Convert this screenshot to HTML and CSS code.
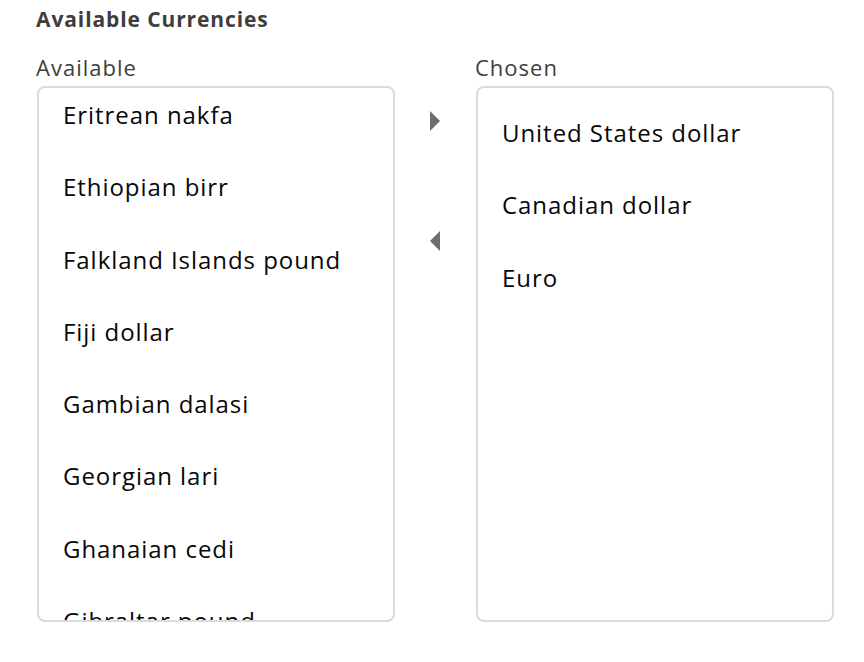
FILE: index.html
```html
<!DOCTYPE html>
<html>
<head>
<meta charset="utf-8">
<link rel="stylesheet" href="styles.css">
</head>
<body>
<div class="dueling">
  <div class="legend">Available Currencies</div>
  <div class="columns">
    <div class="col">
      <div class="label">Available</div>
      <div class="box">
        <ul class="list scrolled">
          <li>Eritrean nakfa</li>
          <li>Ethiopian birr</li>
          <li>Falkland Islands pound</li>
          <li>Fiji dollar</li>
          <li>Gambian dalasi</li>
          <li>Georgian lari</li>
          <li>Ghanaian cedi</li>
          <li>Gibraltar pound</li>
          <li>Guatemalan quetzal</li>
        </ul>
      </div>
    </div>
    <div class="buttons">
      <button class="arrow" aria-label="Move to Chosen">
        <svg width="12" height="22" viewBox="0 0 12 22"><path d="M1 1 L11 11 L1 21 Z" fill="#706e6b"/></svg>
      </button>
      <button class="arrow" aria-label="Move to Available">
        <svg width="12" height="22" viewBox="0 0 12 22"><path d="M11 1 L1 11 L11 21 Z" fill="#706e6b"/></svg>
      </button>
    </div>
    <div class="col">
      <div class="label">Chosen</div>
      <div class="box">
        <ul class="list">
          <li>United States dollar</li>
          <li>Canadian dollar</li>
          <li>Euro</li>
        </ul>
      </div>
    </div>
  </div>
</div>
</body>
</html>
```

FILE: styles.css
```css
html, body {
  margin: 0;
  padding: 0;
  background: #ffffff;
}
body {
  font-family: "Open Sans", "Lato", sans-serif;
  color: #080707;
}
.dueling {
  padding: 4px 0 0 36px;
}
.legend {
  font-size: 21px;
  font-weight: 700;
  letter-spacing: 0.9px;
  color: #3e3e3c;
  line-height: 30px;
  height: 30px;
}
.columns {
  display: flex;
  margin-top: 18px;
}
.col {
  display: flex;
  flex-direction: column;
}
.label {
  font-size: 22px;
  letter-spacing: 1px;
  color: #3e3e3c;
  line-height: 30px;
  height: 30px;
  margin-bottom: 4px;
}
.box {
  width: 354px;
  height: 532px;
  border: 2px solid #dddbda;
  border-radius: 8px;
  overflow: hidden;
  box-sizing: content-box;
  margin-left: 1px;
}
.list {
  list-style: none;
  margin: 0;
  padding: 9px 0 0 0;
}
.list.scrolled {
  margin-top: -18px;
}
.list li {
  font-size: 24px;
  letter-spacing: 0.95px;
  line-height: 72.3px;
  height: 72.3px;
  padding-left: 24px;
  white-space: nowrap;
}
.buttons {
  width: 80px;
  display: flex;
  flex-direction: column;
  align-items: center;
  padding-top: 58px;
  gap: 98px;
}
.arrow {
  border: 0;
  background: transparent;
  padding: 0;
  width: 24px;
  height: 22px;
  display: flex;
  align-items: center;
  justify-content: center;
}
```
